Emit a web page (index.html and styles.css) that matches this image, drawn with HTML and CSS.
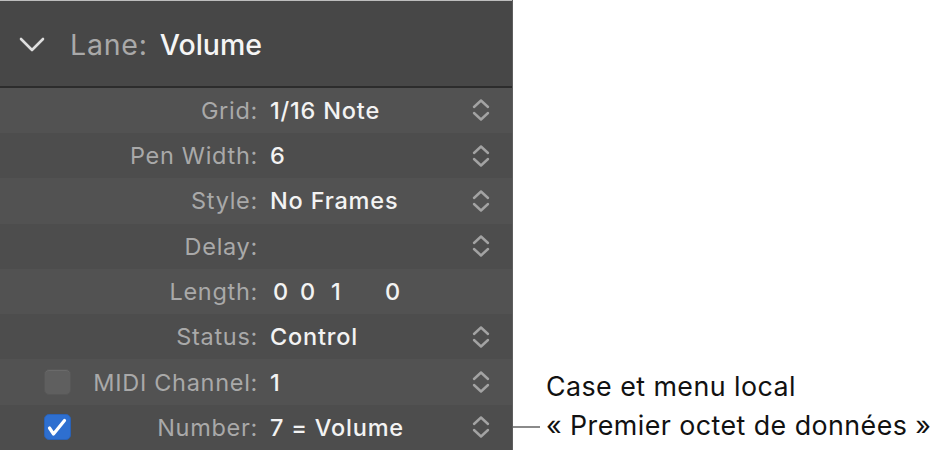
FILE: index.html
```html
<!DOCTYPE html>
<html>
<head>
<meta charset="utf-8">
<link rel="stylesheet" href="styles.css">
</head>
<body>
<div class="page">
  <div class="panel">
    <div class="header">
      <svg class="disclose" width="26" height="16" viewBox="0 0 26 16"><polyline points="2,2 13,13 24,2" fill="none" stroke="#dedede" stroke-width="2.6" stroke-linecap="round" stroke-linejoin="round"/></svg>
      <span class="h-label">Lane:</span>
      <span class="h-value">Volume</span>
    </div>
    <div class="rows">
      <div class="row">
        <span class="check-slot"></span><span class="label">Grid:</span><span class="value">1/16 Note</span>
        <svg class="stepper" width="20" height="24" viewBox="0 0 20 24"><polyline points="3,9 10,2.5 17,9" /><polyline points="3,15 10,21.5 17,15" /></svg>
      </div>
      <div class="row">
        <span class="check-slot"></span><span class="label">Pen Width:</span><span class="value">6</span>
        <svg class="stepper" width="20" height="24" viewBox="0 0 20 24"><polyline points="3,9 10,2.5 17,9" /><polyline points="3,15 10,21.5 17,15" /></svg>
      </div>
      <div class="row">
        <span class="check-slot"></span><span class="label">Style:</span><span class="value">No Frames</span>
        <svg class="stepper" width="20" height="24" viewBox="0 0 20 24"><polyline points="3,9 10,2.5 17,9" /><polyline points="3,15 10,21.5 17,15" /></svg>
      </div>
      <div class="row">
        <span class="check-slot"></span><span class="label">Delay:</span><span class="value"></span>
        <svg class="stepper" width="20" height="24" viewBox="0 0 20 24"><polyline points="3,9 10,2.5 17,9" /><polyline points="3,15 10,21.5 17,15" /></svg>
      </div>
      <div class="row">
        <span class="check-slot"></span><span class="label">Length:</span>
        <span class="value length"><span class="d1">0</span><span class="d2">0</span><span class="d3">1</span><span class="d4">0</span></span>
        <span class="stepper-space"></span>
      </div>
      <div class="row">
        <span class="check-slot"></span><span class="label">Status:</span><span class="value">Control</span>
        <svg class="stepper" width="20" height="24" viewBox="0 0 20 24"><polyline points="3,9 10,2.5 17,9" /><polyline points="3,15 10,21.5 17,15" /></svg>
      </div>
      <div class="row">
        <span class="check-slot"><span class="checkbox"></span></span><span class="label">MIDI Channel:</span><span class="value">1</span>
        <svg class="stepper" width="20" height="24" viewBox="0 0 20 24"><polyline points="3,9 10,2.5 17,9" /><polyline points="3,15 10,21.5 17,15" /></svg>
      </div>
      <div class="row">
        <span class="check-slot"><span class="checkbox checked"><svg width="27" height="26" viewBox="0 0 27 26"><polyline points="5.5,14 9.5,20 20.5,6.5" fill="none" stroke="#ffffff" stroke-width="3.2" stroke-linecap="round" stroke-linejoin="round"/></svg></span></span><span class="label">Number:</span><span class="value">7 = Volume</span>
        <svg class="stepper" width="20" height="24" viewBox="0 0 20 24"><polyline points="3,9 10,2.5 17,9" /><polyline points="3,15 10,21.5 17,15" /></svg>
      </div>
    </div>
  </div>
  <div class="callout">
    <span class="leader"></span>
    <div class="callout-text">
      <div>Case et menu local</div>
      <div>« Premier octet de données »</div>
    </div>
  </div>
</div>
</body>
</html>
```
FILE: styles.css
```css
html, body {
  margin: 0;
  padding: 0;
  background: #ffffff;
}
.page {
  display: flex;
  width: 934px;
  height: 450px;
  overflow: hidden;
  font-family: Inter, "Liberation Sans", sans-serif;
}
.panel {
  width: 512px;
  flex: 0 0 512px;
  border-right: 1px solid #5e5e5e;
  background: #4f4f4f;
  display: flex;
  flex-direction: column;
}
.header {
  height: 82px;
  padding-top: 3px;
  border-top: 1px solid #bdbdbd;
  background: #474747;
  border-bottom: 2px solid #2c2c2c;
  display: flex;
  align-items: center;
  box-sizing: content-box;
}
.disclose {
  margin-left: 19px;
  margin-right: 25px;
  margin-top: 1px;
}
.h-label {
  font-size: 28.5px;
  color: #a9a9a9;
  margin-right: 12px;
  letter-spacing: 0.8px;
}
.h-value {
  font-size: 28.5px;
  color: #f5f5f5;
  font-weight: 500;
  letter-spacing: 0;
}
.rows {
  display: flex;
  flex-direction: column;
}
.row {
  height: 45.3px;
  display: flex;
  align-items: center;
  font-size: 23.5px;
}
.row:nth-child(odd) {
  background: #525252;
}
.row:nth-child(even) {
  background: #4d4d4d;
}
.check-slot {
  width: 27px;
  height: 26px;
  margin-left: 44px;
  flex: 0 0 27px;
  display: flex;
}
.checkbox {
  width: 27px;
  height: 26px;
  box-sizing: border-box;
  border-radius: 5px;
  background: #5f5f5f;
  border: 1px solid #575757;
  box-shadow: inset 0 1px 0 #6a6a6a;
}
.checkbox.checked {
  background: #2e6fd0;
  border-color: #2a62b6;
  box-shadow: none;
}
.checkbox svg {
  display: block;
  margin: -1px;
}
.label {
  flex: 0 0 187px;
  width: 187px;
  text-align: right;
  color: #a9a9a9;
  white-space: nowrap;
  letter-spacing: 0.7px;
}
.value {
  flex: 1;
  margin-left: 12px;
  color: #f3f3f3;
  font-weight: 500;
  white-space: nowrap;
  letter-spacing: 0.8px;
}
.length {
  display: flex;
  margin-left: 15px;
}
.length span {
  display: inline-block;
}
.d1 { width: 27px; }
.d2 { width: 31px; }
.d3 { width: 54px; }
.stepper {
  flex: 0 0 20px;
  margin-right: 21px;
  fill: none;
  stroke: #a3a3a3;
  stroke-width: 2.4;
  stroke-linecap: round;
  stroke-linejoin: round;
}
.stepper-space {
  width: 20px;
  margin-right: 21px;
}
.callout {
  flex: 1;
  display: flex;
  align-items: flex-end;
  padding-bottom: 5px;
}
.leader {
  width: 27px;
  height: 2px;
  background: #8a8a8a;
  margin-bottom: 17px;
  flex: 0 0 27px;
}
.callout-text {
  margin-left: 6px;
  font-size: 26.8px;
  line-height: 39px;
  color: #111111;
  white-space: nowrap;
  letter-spacing: 0.45px;
}
```
